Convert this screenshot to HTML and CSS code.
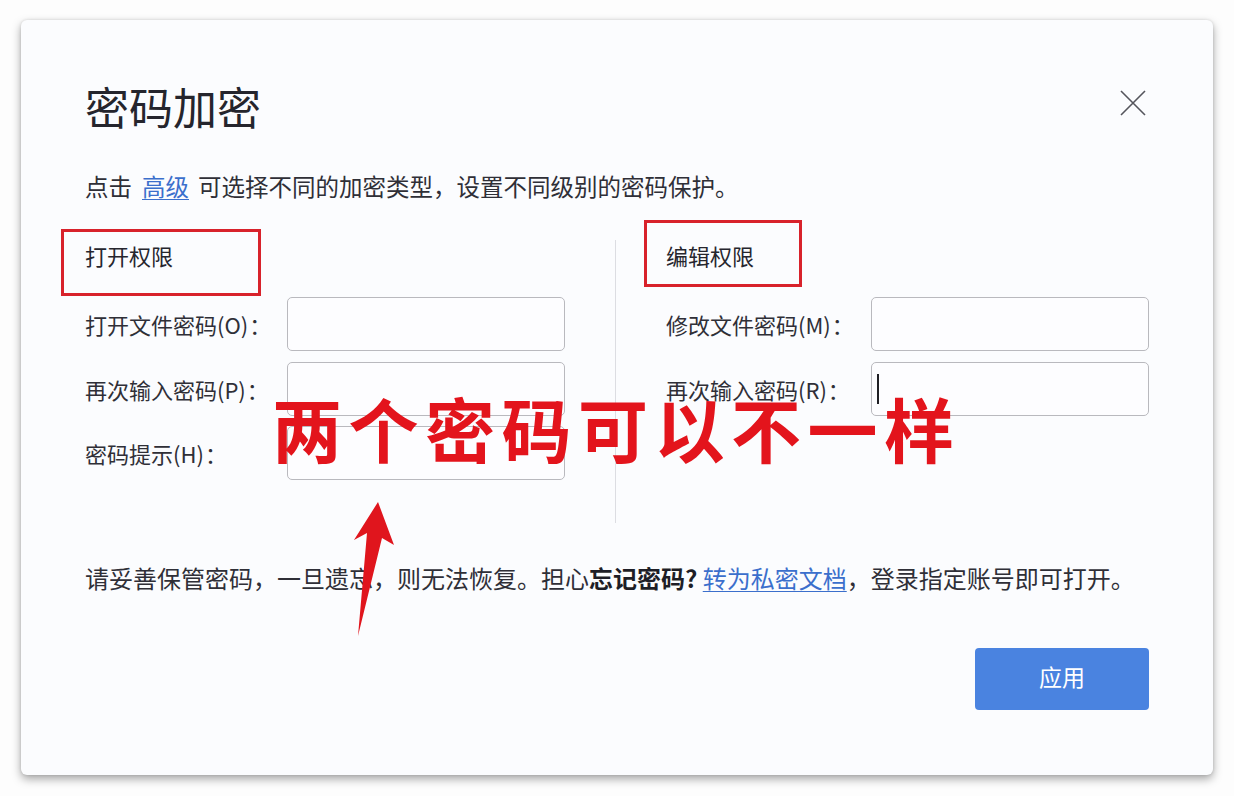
FILE: index.html
```html
<!DOCTYPE html>
<html lang="zh-CN">
<head>
<meta charset="utf-8">
<title>密码加密</title>
<link rel="stylesheet" href="styles.css">
</head>
<body>
<div class="dialog">
  <h1 class="title">密码加密</h1>
  <button class="close" aria-label="关闭">
    <svg width="26" height="26" viewBox="0 0 26 26"><path d="M1 1 L25 25 M25 1 L1 25" stroke="#55555c" stroke-width="1.6" fill="none"/></svg>
  </button>
  <p class="intro">点击<a class="link adv" href="#">高级</a>可选择不同的加密类型，设置不同级别的密码保护。</p>

  <div class="sections">
    <div class="col col-left">
      <div class="heading">打开权限</div>
      <div class="form form-left">
        <label class="lbl">打开文件密码(O)<span class="colon">：</span></label><div class="field"></div>
        <label class="lbl">再次输入密码(P)<span class="colon">：</span></label><div class="field"></div>
        <label class="lbl">密码提示(H)<span class="colon">：</span></label><div class="field"></div>
      </div>
    </div>
    <div class="divider"></div>
    <div class="col col-right">
      <div class="heading">编辑权限</div>
      <div class="form form-right">
        <label class="lbl">修改文件密码(M)<span class="colon">：</span></label><div class="field"></div>
        <label class="lbl">再次输入密码(R)<span class="colon">：</span></label><div class="field"><span class="caret"></span></div>
      </div>
    </div>
  </div>

  <p class="note">请妥善保管密码，一旦遗忘，则无法恢复。担心<b>忘记密码?</b> <a class="link" href="#">转为私密文档</a>，登录指定账号即可打开。</p>

  <div class="actions">
    <button class="apply">应用</button>
  </div>

  <div class="mark mark-left"></div>
  <div class="mark mark-right"></div>
  <div class="callout">两个密码可以不一样</div>
  <svg class="arrow" width="60" height="150" viewBox="0 0 60 150">
    <polygon points="36,0 52,43 40,36 16,134 25,31 12,38" fill="#e0151d"/>
  </svg>
</div>
</body>
</html>
```

FILE: styles.css
```css
* { box-sizing: border-box; }

html, body {
  margin: 0;
  padding: 0;
  background: #fdfdfd;
}

body {
  width: 1234px;
  height: 796px;
  overflow: hidden;
  font-family: "Noto Sans CJK SC", "Noto Sans", sans-serif;
  color: #2b2b33;
}

.dialog {
  position: relative;
  margin: 20px 0 0 21px;
  width: 1192px;
  height: 755px;
  background: #fbfcfe;
  border-radius: 6px;
  box-shadow: 0 4px 10px rgba(0, 0, 0, 0.35), 0 0 3px rgba(0, 0, 0, 0.12);
  padding: 60px 64px 0 64px;
}

.title {
  margin: 0;
  font-size: 44px;
  line-height: 52px;
  font-weight: 400;
  color: #25252d;
}

.close {
  position: absolute;
  top: 70px;
  right: 67px;
  width: 26px;
  height: 26px;
  padding: 0;
  border: 0;
  background: none;
  display: flex;
}

.intro {
  margin: 39px 0 0 0;
  font-size: 23.5px;
  line-height: 30px;
  color: #2f2f37;
}

.link {
  color: #3b6fcc;
  text-decoration: underline;
  text-underline-offset: 3px;
  text-decoration-thickness: 1px;
}

.adv {
  margin: 0 9px 0 10px;
}

.sections {
  display: flex;
  margin-top: 39px;
  height: 283px;
}

.col-left { width: 480px; }
.col-right { width: 483px; }

.divider {
  width: 1px;
  background: #dcdde2;
  margin: 0 50px;
}

.heading {
  font-size: 22px;
  line-height: 30px;
  height: 30px;
  color: #26262e;
}

.form {
  display: grid;
  grid-auto-rows: 54px;
  row-gap: 10.5px;
  margin-top: 27px;
  align-items: center;
}

.form-left { grid-template-columns: 202px 278px; }
.form-right { grid-template-columns: 205px 278px; }

.lbl {
  font-size: 22px;
  line-height: 30px;
  color: #2f2f37;
  white-space: nowrap;
}

.colon {
  font-family: "Noto Sans CJK TC", "Noto Sans CJK SC", sans-serif;
  margin-left: 1px;
}

.field {
  height: 54px;
  border: 1px solid #b9b9be;
  border-radius: 5px;
  background: #fdfdff;
  display: flex;
  align-items: center;
  padding-left: 5px;
}

.caret {
  width: 2px;
  height: 30px;
  background: #1f1f24;
}

.note {
  margin: 40px 0 0 0;
  font-size: 24px;
  line-height: 30px;
  color: #2f2f37;
  white-space: nowrap;
}

.note b {
  font-weight: 700;
  color: #1e1e26;
}

.actions {
  display: flex;
  justify-content: flex-end;
  margin-top: 55px;
}

.apply {
  width: 174px;
  height: 62px;
  border: 0;
  border-radius: 4px;
  background: #4a83e0;
  color: #ffffff;
  font-family: "Noto Sans CJK SC", sans-serif;
  font-size: 23px;
  line-height: 1;
  padding: 0 0 5px 0;
  display: flex;
  align-items: center;
  justify-content: center;
}

.mark {
  position: absolute;
  border: 3px solid #d8222b;
  height: 67px;
}

.mark-left { left: 40px; top: 209px; width: 200px; }
.mark-right { left: 623px; top: 200px; width: 158px; }

.callout {
  position: absolute;
  left: 251px;
  top: 372px;
  font-size: 70px;
  line-height: 72px;
  font-weight: 700;
  letter-spacing: 6.5px;
  color: #e3141c;
  white-space: nowrap;
}

.arrow {
  position: absolute;
  left: 321px;
  top: 482px;
}
```
